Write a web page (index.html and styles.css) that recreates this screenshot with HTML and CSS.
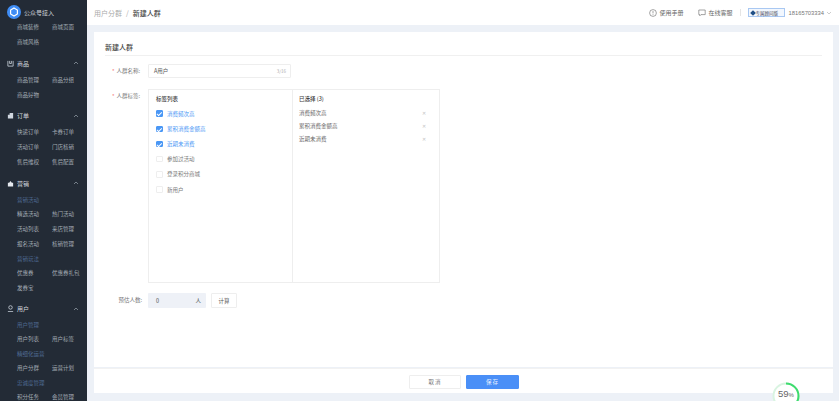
FILE: index.html
```html
<!DOCTYPE html>
<html lang="zh-CN">
<head>
    <meta charset="UTF-8">
    <title>新建人群</title>
    <link rel="stylesheet" href="styles.css">
</head>
<body>
    <div class="layout">
        <!-- 侧边栏 -->
        <aside class="sidebar">
            <div class="brand">
                <span class="brand-logo">
                    <svg viewBox="0 0 14 14" width="14" height="14"><circle cx="7" cy="7" r="7" fill="#3f8df5"/><path d="M7 3l3.4 2v4L7 11 3.6 9V5z" fill="none" stroke="#fff" stroke-width="1.2"/></svg>
                </span>
                <span class="brand-name">公众号接入</span>
            </div>
            <div class="nav-items">
                <span>商城装修</span><span>商城页面</span>
                <span>商城风格</span>
            </div>

            <div class="nav-group">
                <svg class="nav-icon" viewBox="0 0 8 8"><path d="M1 1v6h6V1M3 1v3h2V1" fill="none" stroke="#cfd6df" stroke-width=".9"/></svg>
                <span class="nav-title">商品</span>
                <svg class="nav-arrow" viewBox="0 0 6 4"><path d="M1 3l2-2 2 2" fill="none" stroke="#9aa3ae" stroke-width=".7"/></svg>
            </div>
            <div class="nav-items">
                <span>商品管理</span><span>商品分组</span>
                <span>商品好物</span>
            </div>

            <div class="nav-group">
                <svg class="nav-icon" viewBox="0 0 8 8"><path d="M1 3h6v4.500H1zM3 3V1h4v2" fill="#cfd6df"/></svg>
                <span class="nav-title">订单</span>
                <svg class="nav-arrow" viewBox="0 0 6 4"><path d="M1 3l2-2 2 2" fill="none" stroke="#9aa3ae" stroke-width=".7"/></svg>
            </div>
            <div class="nav-items">
                <span>快递订单</span><span>卡券订单</span>
                <span>活动订单</span><span>门店核销</span>
                <span>售后维权</span><span>售后配置</span>
            </div>

            <div class="nav-group">
                <svg class="nav-icon" viewBox="0 0 8 8"><path d="M1 3h6v4.500H1zM2.500 3l1.500-2 1.500 2" fill="#e4e8ee"/></svg>
                <span class="nav-title">营销</span>
                <svg class="nav-arrow" viewBox="0 0 6 4"><path d="M1 3l2-2 2 2" fill="none" stroke="#9aa3ae" stroke-width=".7"/></svg>
            </div>
            <div class="nav-label">营销活动</div>
            <div class="nav-items">
                <span>精选活动</span><span>热门活动</span>
                <span>活动列表</span><span>来店管理</span>
                <span>报名活动</span><span>核销管理</span>
            </div>
            <div class="nav-label">营销玩法</div>
            <div class="nav-items">
                <span>优惠券</span><span>优惠券礼包</span>
                <span>发券宝</span>
            </div>

            <div class="nav-group">
                <svg class="nav-icon" viewBox="0 0 8 8"><circle cx="4" cy="2.800" r="2" fill="none" stroke="#cfd6df" stroke-width=".9"/><path d="M1 7.500h6" stroke="#cfd6df" stroke-width=".9"/></svg>
                <span class="nav-title">用户</span>
                <svg class="nav-arrow" viewBox="0 0 6 4"><path d="M1 3l2-2 2 2" fill="none" stroke="#9aa3ae" stroke-width=".7"/></svg>
            </div>
            <div class="nav-label">用户管理</div>
            <div class="nav-items">
                <span>用户列表</span><span>用户标签</span>
            </div>
            <div class="nav-label">精细化运营</div>
            <div class="nav-items">
                <span>用户分群</span><span>运营计划</span>
            </div>
            <div class="nav-label">忠诚度管理</div>
            <div class="nav-items">
                <span>积分任务</span><span>会员管理</span>
            </div>
        </aside>

        <div class="main">
            <!-- 顶部 -->
            <header class="topbar">
                <div class="crumbs">
                    <span class="crumb-link">用户分群</span>
                    <span class="crumb-sep">/</span>
                    <span class="crumb-now">新建人群</span>
                </div>
                <div class="top-actions">
                    <span class="top-link">
                        <svg viewBox="0 0 8 8" width="8" height="8"><circle cx="4" cy="4" r="3.400" fill="none" stroke="#666" stroke-width=".6"/><path d="M4 2v2.400M4 5.200v.7" stroke="#666" stroke-width=".6"/></svg>
                        使用手册
                    </span>
                    <span class="top-link">
                        <svg viewBox="0 0 8 8" width="8" height="8"><path d="M.8 1h6.400v4.600H3L1.800 6.800V5.600h-1z" fill="none" stroke="#666" stroke-width=".6"/></svg>
                        在线客服
                    </span>
                    <span class="top-divider"></span>
                    <span class="vip-badge"><i class="vip-dot"></i>专属顾问版</span>
                    <span class="phone">18165703334</span>
                    <svg class="phone-arrow" viewBox="0 0 6 4" width="6" height="4"><path d="M1 1l2 2 2-2" fill="none" stroke="#aaa" stroke-width=".6"/></svg>
                </div>
            </header>

            <!-- 表单 -->
            <main class="card">
                <h1 class="card-title">新建人群</h1>

                <div class="form-row">
                    <label class="form-label"><em>*</em>人群名称:</label>
                    <div class="text-input">
                        <span>A用户</span>
                        <span class="count">3/16</span>
                    </div>
                </div>

                <div class="form-row tags-row">
                    <label class="form-label"><em>*</em>人群标签:</label>
                    <div class="tag-box">
                        <div class="tag-list">
                            <div class="tag-head">标签列表</div>
                            <div class="check-item on"><i class="check"></i>消费频次高</div>
                            <div class="check-item on"><i class="check"></i>累积消费金额高</div>
                            <div class="check-item on"><i class="check"></i>近期未消费</div>
                            <div class="check-item"><i class="check"></i>参加过活动</div>
                            <div class="check-item"><i class="check"></i>登录积分商城</div>
                            <div class="check-item"><i class="check"></i>新用户</div>
                        </div>
                        <div class="tag-picked">
                            <div class="tag-head">已选择 (3)</div>
                            <div class="picked-item"><span>消费频次高</span><span class="remove">✕</span></div>
                            <div class="picked-item"><span>累积消费金额高</span><span class="remove">✕</span></div>
                            <div class="picked-item"><span>近期未消费</span><span class="remove">✕</span></div>
                        </div>
                    </div>
                </div>

                <div class="form-row estimate-row">
                    <label class="form-label">预估人数:</label>
                    <div class="estimate-input"><span>0</span><span>人</span></div>
                    <button class="btn-calc">计算</button>
                </div>
            </main>

            <footer class="actions">
                <button class="btn-cancel">取 消</button>
                <button class="btn-save">保 存</button>
            </footer>
        </div>
    </div>

    <div class="progress">
        <svg viewBox="0 0 28 28" width="28" height="28">
            <circle cx="14" cy="14" r="12.500" fill="#fff" stroke="#d9f4e1" stroke-width="2"/>
            <circle cx="14" cy="14" r="12.500" fill="none" stroke="#3ddc6e" stroke-width="2" stroke-dasharray="46.300 78.500" transform="rotate(-90 14 14)"/>
        </svg>
        <span class="progress-text">59<small>%</small></span>
    </div>
</body>
</html>
```

FILE: styles.css
```css
* {
    box-sizing: border-box;
}

html, body {
    margin: 0;
    height: 100%;
    overflow: hidden;
}

body {
    font-family: "Noto Sans CJK SC", "Liberation Sans", sans-serif;
    background: #edf1f7;
    color: #555;
    font-size: 5.500px;
}

.layout {
    display: flex;
    height: 401px;
}

/* 侧边栏 */
.sidebar {
    width: 87px;
    height: 401px;
    overflow: hidden;
    background: #232b36;
    color: #a4abb5;
    flex-shrink: 0;
}

.brand {
    display: flex;
    align-items: center;
    height: 20px;
    padding: 4px 0 0 7px;
}

.brand-logo {
    display: flex;
    margin-right: 3px;
}

.brand-name {
    font-size: 6px;
    color: #d3d8de;
}

.nav-items {
    display: grid;
    grid-template-columns: 35px 35px;
    padding-left: 17px;
    grid-auto-rows: 15px;
    align-items: center;
    line-height: 15px;
}

.nav-group {
    display: flex;
    align-items: center;
    height: 15px;
    margin-top: 5.500px;
    margin-bottom: 2px;
    padding-left: 7px;
}

.nav-icon {
    width: 7px;
    height: 7px;
    margin-right: 3px;
}

.nav-title {
    font-size: 6px;
    color: #d3d8de;
    flex: 1;
}

.nav-arrow {
    width: 6px;
    height: 4px;
    margin-right: 8px;
}

.nav-label {
    height: 14px;
    line-height: 14px;
    padding-left: 17px;
    color: #4f6a92;
}

/* 右侧 */
.main {
    flex: 1;
    display: flex;
    flex-direction: column;
    min-width: 0;
}

.topbar {
    display: flex;
    align-items: center;
    justify-content: space-between;
    height: 25px;
    background: #fff;
    padding: 0 7px 0 7px;
}

.crumbs {
    display: flex;
    align-items: center;
    font-size: 7px;
}

.crumb-link {
    color: #aaa;
}

.crumb-sep {
    color: #aaa;
    margin: 0 4px;
}

.crumb-now {
    color: #444;
    font-weight: 500;
}

.top-actions {
    display: flex;
    align-items: center;
    color: #666;
}

.top-link {
    display: flex;
    align-items: center;
    gap: 3px;
    margin-right: 15px;
    font-size: 6px;
    margin-left: -1px;
}

.top-divider {
    width: 1px;
    height: 7px;
    background: #e5e5e5;
    margin: 0 7px 0 -8px;
}

.vip-badge {
    display: flex;
    align-items: center;
    width: 37px;
    height: 9px;
    border: 1px solid #a9c8f2;
    background: #f2f7fe;
    font-size: 4.500px;
    padding-left: 2px;
    color: #445;
    margin-right: 4px;
}

.vip-dot {
    width: 4px;
    height: 4px;
    margin-right: 1px;
    background: #1f4f86;
    transform: rotate(45deg);
}

.phone {
    font-family: "Liberation Sans", sans-serif;
    font-size: 5.800px;
    color: #777;
    margin-right: 2px;
}

.card {
    flex: 1;
    margin: 7px 6px 1px 7px;
    background: #fff;
    padding: 10px 11px 0;
}

.card-title {
    margin: 0;
    height: 14px;
    line-height: 10px;
    font-size: 7px;
    font-weight: 500;
    color: #444;
    border-bottom: 1px solid #f0f0f0;
    margin-bottom: 8px;
}

.form-row {
    display: flex;
    align-items: flex-start;
}

.form-label {
    width: 43px;
    padding-left: 7px;
    line-height: 14px;
    color: #777;
}

.form-label em {
    color: #f05050;
    font-style: normal;
    margin-right: 2px;
}

.text-input {
    display: flex;
    justify-content: space-between;
    align-items: center;
    width: 143px;
    height: 14px;
    border: 1px solid #eee;
    border-radius: 1px;
    padding: 0 4px 0 5px;
    color: #555;
}

.count {
    color: #aaa;
    font-size: 4.500px;
}

.tags-row {
    margin-top: 11px;
}

.tag-box {
    display: flex;
    width: 292px;
    height: 194px;
    border: 1px solid #eee;
}

.tag-list {
    width: 144px;
    border-right: 1px solid #eee;
    padding: 5px 0 0 7px;
}

.tag-picked {
    flex: 1;
    padding: 5px 13px 0 6px;
}

.tag-head {
    height: 9px;
    line-height: 9px;
    font-weight: 500;
    color: #444;
}

.check-item {
    display: flex;
    align-items: center;
    height: 15.200px;
    color: #777;
}

.check-item:nth-child(2) {
    margin-top: 2px;
}

.check {
    width: 6.500px;
    height: 6.500px;
    border: 1px solid #eee;
    border-radius: 1px;
    margin-right: 4.500px;
    position: relative;
}

.check-item.on {
    color: #4a97f5;
}

.check-item.on .check {
    background: #4a97f5;
    border-color: #4a97f5;
}

/* 勾 */
.check-item.on .check::after {
    content: "";
    position: absolute;
    left: 1.300px;
    top: 0;
    width: 2px;
    height: 3.500px;
    border: solid #fff;
    border-width: 0 .7px .7px 0;
    transform: rotate(45deg);
}

.picked-item {
    display: flex;
    justify-content: space-between;
    align-items: center;
    height: 13px;
    color: #666;
}

.picked-item:nth-child(2) {
    margin-top: 2px;
}

.remove {
    color: #c4c4c4;
    font-size: 5px;
}

.estimate-row {
    margin-top: 10px;
}

.estimate-row .form-label {
    text-align: right;
    padding-right: 6px;
    height: 15px;
    line-height: 15px;
}

.estimate-input {
    display: flex;
    justify-content: space-between;
    align-items: center;
    width: 58px;
    height: 15px;
    background: #eef1f7;
    border-radius: 1px;
    padding: 0 5px 0 8px;
}

.btn-calc {
    width: 26px;
    height: 15px;
    margin-left: 5px;
    padding: 0;
    background: #fff;
    border: 1px solid #eee;
    border-radius: 1px;
    font: inherit;
    color: #555;
}

.actions {
    display: flex;
    justify-content: center;
    gap: 5px;
    height: 25px;
    margin: 0 6px 8px 7px;
    padding-top: 6px;
    background: #fff;
    border-top: 1px solid #f2f2f2;
}

.actions button {
    height: 14px;
    padding: 0;
    border-radius: 1px;
    font: inherit;
}

.btn-cancel {
    width: 52px;
    background: #fff;
    border: 1px solid #eee;
    color: #777;
}

.btn-save {
    width: 53px;
    background: #4a8ff7;
    border: 1px solid #4a8ff7;
    color: #e6f0ff;
}

/* 悬浮进度球 */
.progress {
    position: absolute;
    left: 772px;
    top: 382px;
    width: 28px;
    height: 28px;
}

.progress svg {
    display: block;
}

.progress-text {
    position: absolute;
    left: 6px;
    top: 5px;
    font-family: "Liberation Sans", sans-serif;
    font-size: 9.500px;
    line-height: 14px;
    color: #666;
}

.progress-text small {
    font-size: 6px;
}
```
